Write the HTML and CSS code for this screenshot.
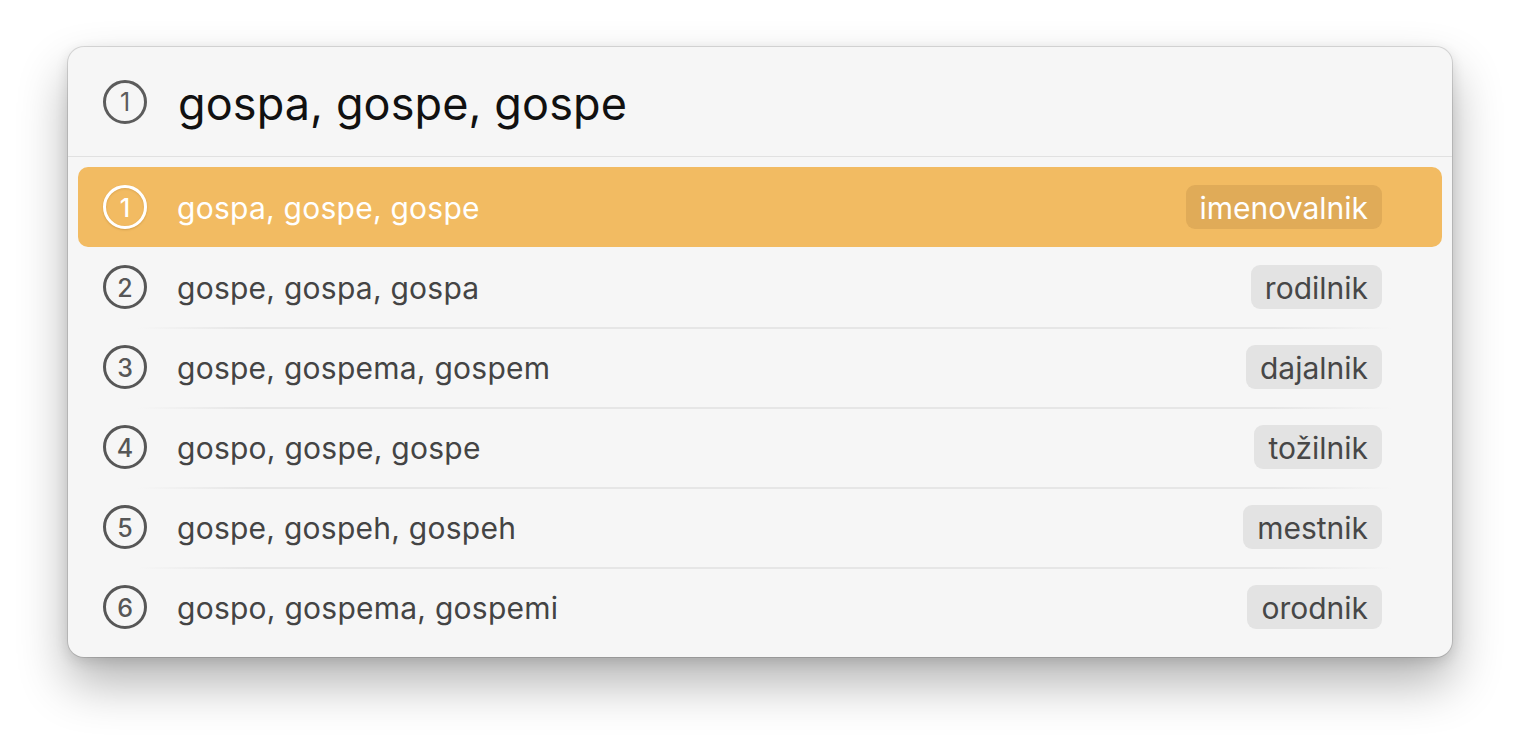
FILE: index.html
```html
<!DOCTYPE html>
<html lang="sl">
<head>
<meta charset="utf-8">
<title>gospa</title>
<link rel="stylesheet" href="styles.css">
</head>
<body>
<div class="window">
  <div class="header">
    <span class="num num-head">1</span>
    <span class="query">gospa, gospe, gospe</span>
  </div>
  <div class="list">
    <div class="row selected">
      <span class="num">1</span>
      <span class="label">gospa, gospe, gospe</span>
      <span class="tag">imenovalnik</span>
    </div>
    <div class="row">
      <span class="num">2</span>
      <span class="label">gospe, gospa, gospa</span>
      <span class="tag">rodilnik</span>
    </div>
    <div class="row sep">
      <span class="num">3</span>
      <span class="label">gospe, gospema, gospem</span>
      <span class="tag">dajalnik</span>
    </div>
    <div class="row sep">
      <span class="num">4</span>
      <span class="label">gospo, gospe, gospe</span>
      <span class="tag">tožilnik</span>
    </div>
    <div class="row sep">
      <span class="num">5</span>
      <span class="label">gospe, gospeh, gospeh</span>
      <span class="tag">mestnik</span>
    </div>
    <div class="row sep">
      <span class="num">6</span>
      <span class="label">gospo, gospema, gospemi</span>
      <span class="tag">orodnik</span>
    </div>
  </div>
</div>
</body>
</html>
```
FILE: styles.css
```css
* { box-sizing: border-box; }
html, body { margin: 0; padding: 0; background: #ffffff; }
body {
  min-height: 746px;
  padding: 47px 68px;
  font-family: Inter, "Noto Sans", "Liberation Sans", sans-serif;
}
.window {
  width: 1384px;
  height: 610px;
  background: #f6f6f6;
  border-radius: 16px;
  box-shadow: 0 0 0 1px rgba(0,0,0,0.12), 0 26px 50px rgba(0,0,0,0.3), 0 4px 14px rgba(0,0,0,0.12);
  overflow: hidden;
}
.header {
  height: 110px;
  display: flex;
  align-items: center;
  padding-left: 35px;
  border-bottom: 1px solid #e1e1e1;
}
.query {
  margin-left: 31px;
  font-size: 45px;
  letter-spacing: 0.1px;
  color: #111;
  padding-top: 4px;
}
.num {
  flex: none;
  width: 44px;
  height: 44px;
  border: 3px solid #575757;
  border-radius: 50%;
  display: flex;
  align-items: center;
  justify-content: center;
  font-size: 25px;
  font-weight: 500;
  color: #575757;
  padding-top: 1px;
}
.num-head {
  border-width: 3px;
  color: #5c5c5c;
  border-color: #5c5c5c;
  font-weight: 400;
}
.list {
  padding: 10px 10px 9px;
}
.row {
  position: relative;
  height: 80px;
  display: flex;
  align-items: center;
  padding: 0 60px 0 25px;
  border-radius: 10px;
}
.row.sep::before {
  content: "";
  position: absolute;
  left: 0;
  right: 0;
  top: 0;
  height: 2px;
  background: linear-gradient(to right, rgba(225,225,225,0) 60px, #e6e6e6 170px, #e6e6e6 calc(100% - 170px), rgba(225,225,225,0) calc(100% - 50px));
}
.label {
  margin-left: 30px;
  flex: 1;
  font-size: 30px;
  letter-spacing: 0.25px;
  color: #444;
  padding-top: 2px;
}
.tag {
  height: 44px;
  display: flex;
  align-items: center;
  padding: 2px 14px 0;
  border-radius: 9px;
  background: #e3e3e3;
  font-size: 30px;
  color: #474747;
}
.row.selected {
  background: #f2bb62;
}
.row.selected .num {
  border-color: #fff;
  color: #fff;
  box-shadow: 0 1px 2px rgba(150,100,30,0.35), inset 0 1px 2px rgba(150,100,30,0.25);
}
.row.selected .label { color: #fff; }
.row.selected .tag {
  background: #e0ab58;
  color: #fff;
}
```
